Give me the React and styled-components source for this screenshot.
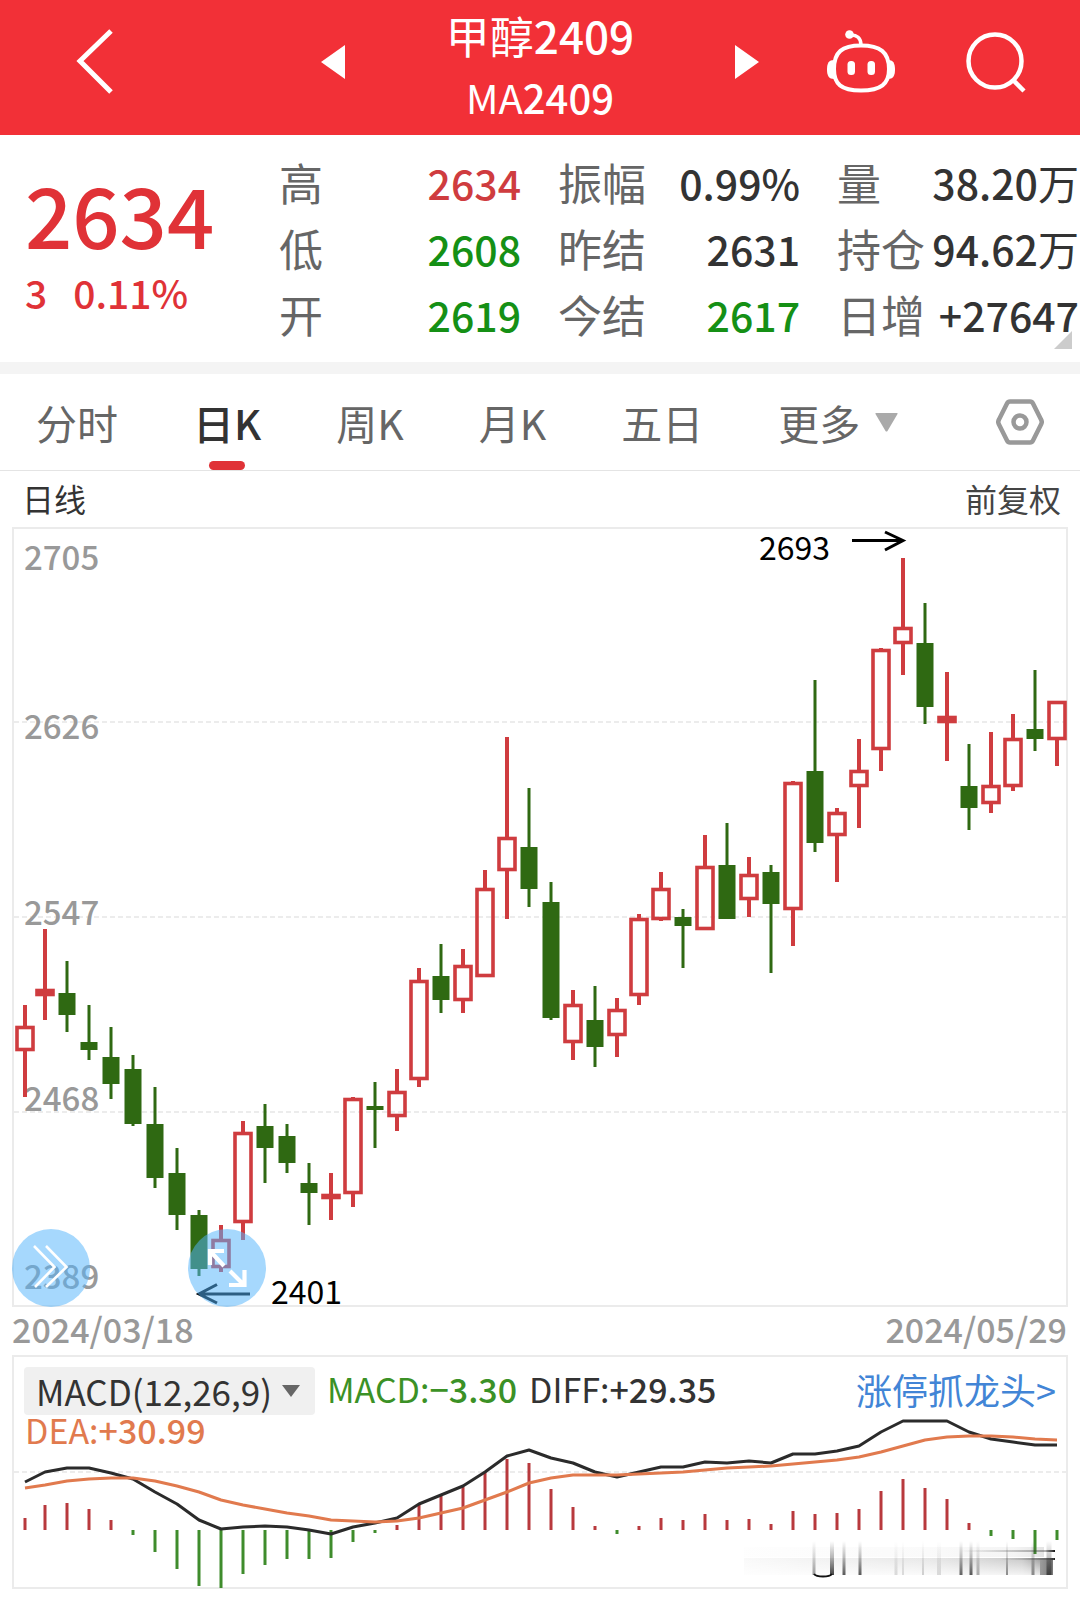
import React, { useState } from "react";
import styled, { createGlobalStyle } from "styled-components";

const RED = "#cf3c3f";
const GREEN = "#2f6912";

const GlobalStyle = createGlobalStyle`
  * {
    box-sizing: border-box;
  }

  body {
    margin: 0;
    background-color: #fff;
    color: #333;
    font-family: "Noto Sans CJK SC", "Noto Sans", sans-serif;
  }

  button, select {
    margin: 0;
    padding: 0;
    border: none;
    background: none;
    color: inherit;
    font-family: inherit;
    cursor: pointer;
  }

  svg {
    display: block;
  }
`;

const Page = styled.main`
  width: 100%;
`;

// ---------- header ----------

const Header = styled.header`
  display: grid;
  grid-template-columns: 1fr 438px 1fr;
  align-items: center;
  padding-bottom: 11px;
  background-color: #f23037;
  color: #fff;
`;

const HeaderLeft = styled.div`
  display: flex;
  padding-left: 74px;
`;

const HeaderCenter = styled.div`
  display: flex;
  align-items: center;
  justify-content: space-between;
`;

const HeaderRight = styled.div`
  display: flex;
  align-items: center;
  justify-content: flex-end;
  gap: 70px;
  padding-right: 54px;
`;

const Title = styled.h1`
  margin: 0;
  font-size: 44px;
  line-height: 70px;
  font-weight: 400;
  text-align: center;
`;

const Code = styled.small`
  display: block;
  font-size: 40px;
  line-height: 54px;
`;

const Num = styled.span`
  font-weight: 500;
`;

// ---------- quote ----------

const Quote = styled.section`
  position: relative;
  display: grid;
  grid-template-columns: 217px 1fr 1fr 1fr;
  column-gap: 37px;
  padding: 14px 1px 15px 25px;
  border-bottom: 12px solid #f4f4f4;
`;

const Latest = styled.div`
  padding-top: 22px;
  color: #e03237;
  font-weight: 500;
`;

const Price = styled.div`
  font-size: 83px;
  line-height: 84px;
`;

const Change = styled.div`
  display: flex;
  gap: 26px;
  padding-top: 8px;
  font-size: 39px;
  line-height: 58px;
`;

const Stats = styled.dl`
  margin: 0;
`;

const Stat = styled.div`
  display: flex;
  justify-content: space-between;
  line-height: 66px;
  white-space: nowrap;

  dt {
    font-size: 44px;
    color: #666;
  }

  dd {
    margin: 0;
    font-size: 41px;
    font-weight: 500;
    color: ${(props) => props.$color || "#333"};
  }
`;

const Unit = styled.span`
  font-weight: 400;
`;

const Corner = styled.svg`
  position: absolute;
  right: 8px;
  bottom: 13px;
`;

// ---------- tabs ----------

const Tabs = styled.nav`
  display: flex;
  align-items: stretch;
  gap: 75px;
  padding: 0 36px;
  border-bottom: 1px solid #e4e4e4;
`;

const Tab = styled.button`
  position: relative;
  display: flex;
  align-items: center;
  gap: 15px;
  height: 96px;
  font-size: 41px;
  line-height: 96px;
  font-weight: ${(props) => (props.$active ? 500 : 400)};
  color: ${(props) => (props.$active ? "#333" : "#666")};

  &::after {
    content: "";
    display: ${(props) => (props.$active ? "block" : "none")};
    position: absolute;
    left: 50%;
    bottom: 0;
    width: 36px;
    height: 9px;
    margin-left: -18px;
    border-radius: 5px;
    background-color: #e03237;
  }
`;

const Settings = styled.button`
  margin-left: auto;
`;

// ---------- chart ----------

const ChartHead = styled.div`
  display: flex;
  justify-content: space-between;
  padding: 0 19px 2px 22px;
  font-size: 32px;
  line-height: 54px;
`;

const Adjust = styled.span`
  color: #444;
`;

const Frame = styled.div`
  position: relative;
  margin: 0 12px;
  border: 2px solid #ebebeb;
`;

const Plot = styled.svg`
  width: 100%;
  height: auto;
  overflow: visible;
  font-size: 33px;
`;

const RoundButton = styled.button`
  position: absolute;
  left: ${(props) => props.$left};
  bottom: -2px;
  width: 78px;
  height: 78px;
  border-radius: 50%;
  background-color: rgba(84, 181, 251, 0.52);
`;

const Dates = styled.div`
  display: flex;
  justify-content: space-between;
  padding: 0 13px 4px 12px;
  font-size: 34px;
  line-height: 44px;
  font-weight: 500;
  color: #999;
`;

const MacdFrame = styled.section`
  display: grid;
  margin: 0 12px;
  border: 2px solid #ebebeb;

  > * {
    grid-area: 1 / 1;
  }
`;

const MacdHead = styled.div`
  z-index: 1;
  display: flex;
  flex-wrap: wrap;
  align-content: flex-start;
  column-gap: 12px;
  padding: 10px 10px 0;
  font-size: 34px;
  line-height: 44px;
`;

const Picker = styled.label`
  display: flex;
  align-items: center;
  gap: 10px;
  height: 48px;
  padding: 0 15px 0 12px;
  border-radius: 4px;
  background-color: #f0f0f0;

  select {
    appearance: none;
    height: 48px;
    font-size: 35px;
    line-height: 44px;
    font-weight: 400;
    color: #333;
  }
`;

const Value = styled.span`
  color: ${(props) => props.$color || "#333"};
`;

const Dea = styled.div`
  width: 100%;
  padding-left: 1px;
  line-height: 30px;
  color: #e17a4e;
`;

const Promo = styled.a`
  margin-left: auto;
  font-size: 36px;
  color: #4285d6;
  text-decoration: none;
`;

// ---------- data ----------

const up = "#cf3c3f";
const down = "#159015";

const stats = [
  [
    { label: "高", value: "2634", color: up },
    { label: "低", value: "2608", color: down },
    { label: "开", value: "2619", color: down },
  ],
  [
    { label: "振幅", value: "0.99%" },
    { label: "昨结", value: "2631" },
    { label: "今结", value: "2617", color: down },
  ],
  [
    { label: "量", value: "38.20", unit: "万" },
    { label: "持仓", value: "94.62", unit: "万" },
    { label: "日增", value: "+27647" },
  ],
];

const tabs = ["分时", "日K", "周K", "月K", "五日"];

const axis = [
  { label: "2705", y: 570 },
  { label: "2626", y: 739, line: 722 },
  { label: "2547", y: 925, line: 917 },
  { label: "2468", y: 1111, line: 1112 },
  { label: "2389", y: 1289 },
];

// [rising, high, body top, body bottom, low] in plot units
const candles = [
  [1, 1005, 1026, 1051, 1097],
  [1, 929, 989, 996, 1020],
  [0, 961, 993, 1015, 1032],
  [0, 1005, 1042, 1050, 1060],
  [0, 1027, 1057, 1084, 1099],
  [0, 1055, 1069, 1124, 1126],
  [0, 1087, 1124, 1178, 1188],
  [0, 1148, 1173, 1215, 1230],
  [0, 1210, 1215, 1269, 1276],
  [1, 1225, 1239, 1268, 1272],
  [1, 1121, 1132, 1223, 1240],
  [0, 1104, 1126, 1148, 1183],
  [0, 1124, 1136, 1163, 1173],
  [0, 1163, 1183, 1193, 1225],
  [1, 1173, 1194, 1199, 1220],
  [1, 1097, 1098, 1194, 1207],
  [0, 1082, 1106, 1110, 1148],
  [1, 1069, 1091, 1117, 1131],
  [1, 968, 980, 1080, 1087],
  [0, 944, 976, 1000, 1013],
  [1, 949, 965, 1001, 1013],
  [1, 870, 888, 977, 977],
  [1, 737, 837, 871, 919],
  [0, 788, 847, 889, 907],
  [0, 882, 902, 1018, 1020],
  [1, 990, 1004, 1043, 1060],
  [0, 986, 1020, 1047, 1067],
  [1, 998, 1009, 1036, 1057],
  [1, 914, 918, 996, 1005],
  [1, 872, 888, 920, 921],
  [0, 909, 917, 926, 968],
  [1, 835, 866, 930, 930],
  [0, 823, 865, 919, 919],
  [1, 857, 874, 900, 917],
  [0, 865, 872, 904, 973],
  [1, 781, 782, 910, 946],
  [0, 680, 771, 843, 852],
  [1, 808, 812, 836, 882],
  [1, 739, 770, 787, 828],
  [1, 648, 649, 750, 771],
  [1, 558, 627, 644, 675],
  [0, 603, 643, 707, 724],
  [1, 672, 716, 723, 761],
  [0, 744, 786, 808, 830],
  [1, 732, 785, 804, 813],
  [1, 714, 738, 787, 791],
  [0, 670, 729, 739, 751],
  [1, 701, 701, 740, 766],
];

const diff = [
  1482, 1472, 1468, 1468, 1473, 1479, 1492, 1504, 1520, 1529, 1527, 1526, 1527,
  1530, 1534, 1527, 1523, 1518, 1504, 1495, 1486, 1472, 1456, 1450, 1458, 1463,
  1472, 1477, 1472, 1467, 1467, 1462, 1463, 1461, 1463, 1454, 1454, 1451, 1446,
  1432, 1421, 1421, 1421, 1432, 1439, 1442, 1445, 1445,
];

const dea = [
  1488, 1485, 1481, 1479, 1478, 1478, 1481, 1486, 1492, 1500, 1505, 1509, 1513,
  1516, 1520, 1521, 1522, 1521, 1518, 1513, 1508, 1500, 1492, 1483, 1478, 1475,
  1475, 1475, 1474, 1473, 1472, 1470, 1468, 1467, 1466, 1464, 1462, 1460, 1457,
  1452, 1446, 1440, 1437, 1436, 1436, 1437, 1439, 1440,
];

const ZERO = 1530;
const bars = [
  12, 25, 27, 21, 10, -5, -22, -39, -56, -58, -44, -35, -29, -29, -28, -12, -3,
  5, 25, 34, 43, 58, 71, 67, 41, 23, 4, -4, 4, 12, 10, 16, 10, 11, 6, 19, 16,
  17, 21, 39, 51, 42, 31, 7, -6, -9, -24, -10,
];

// faded vertical strokes: [x, width, opacity]
const streaks = [
  [814, 3, 0.45],
  [832, 4, 0.85],
  [844, 3, 0.75],
  [860, 3, 0.75],
  [896, 3, 0.15],
  [903, 2, 0.15],
  [923, 2, 0.2],
  [939, 4, 0.15],
  [961, 3, 0.7],
  [971, 3, 0.75],
  [978, 3, 0.35],
  [1007, 2, 0.5],
  [1033, 3, 0.5],
  [1049, 5, 0.7],
];

const xAt = (i) => (i === 0 ? 25 : 23 + 22 * i);
const toPoints = (list) => list.map((y, i) => `${xAt(i)},${y}`).join(" ");

// ---------- pieces ----------

const Candle = ({ x, rising, high, top, bottom, low }) =>
  rising ? (
    <g stroke={RED} fill={bottom - top < 9 ? RED : "none"}>
      <path d={`M${x} ${high}V${top + 1}M${x} ${bottom - 1}V${low}`} strokeWidth="4" />
      <rect
        x={x - 8}
        y={top + 1.5}
        width="16"
        height={Math.max(bottom - top - 3, 2)}
        strokeWidth="3.6"
      />
    </g>
  ) : (
    <g fill={GREEN}>
      <rect x={x - 1.5} y={high} width="3" height={low - high} />
      <rect x={x - 8.5} y={top} width="17" height={bottom - top} />
    </g>
  );

const KChart = () => (
  <Plot viewBox="14 529 1052 776" role="img" aria-label="日线">
    {axis.map((a) => (
      <g key={a.label}>
        {a.line && (
          <path
            d={`M14 ${a.line}H1066`}
            stroke="#e6e6e6"
            strokeWidth="1.5"
            strokeDasharray="5 3"
          />
        )}
        <text x="24" y={a.y} fill="#999" fontWeight="500">
          {a.label}
        </text>
      </g>
    ))}
    {candles.map(([rising, high, top, bottom, low], i) => (
      <Candle key={i} x={xAt(i)} {...{ rising, high, top, bottom, low }} />
    ))}
    <g fill="none" stroke="#000" strokeWidth="3">
      <path d="M852 540.500H902M885 532L903 540.500L885 550" />
      <path d="M250 1294H200M217 1284.500L199 1294L217 1303" />
    </g>
    <g fill="#000" fontSize="32">
      <text x="759" y="560">
        2693
      </text>
      <text x="271" y="1304">
        2401
      </text>
    </g>
  </Plot>
);

const MacdChart = () => (
  <Plot viewBox="14 1357 1052 230" role="img" aria-label="MACD">
    <defs>
      <linearGradient id="streak" x1="0" y1="0" x2="0" y2="1">
        <stop offset="0" stopColor="#222" stopOpacity="0" />
        <stop offset="0.5" stopColor="#222" stopOpacity="0.4" />
        <stop offset="1" stopColor="#222" />
      </linearGradient>
      <linearGradient id="band">
        <stop offset="0" stopColor="#888" stopOpacity="0.05" />
        <stop offset="0.6" stopColor="#888" stopOpacity="0.2" />
        <stop offset="0.9" stopColor="#777" stopOpacity="0.4" />
        <stop offset="1" stopColor="#555" stopOpacity="0.8" />
      </linearGradient>
      <linearGradient id="fade" x1="0" y1="0" x2="0" y2="1">
        <stop offset="0" stopColor="#fff" stopOpacity="0" />
        <stop offset="1" stopColor="#fff" stopOpacity="0.8" />
      </linearGradient>
      <linearGradient id="rule">
        <stop offset="0" stopColor="#333" stopOpacity="0" />
        <stop offset="0.9" stopColor="#333" stopOpacity="0.4" />
        <stop offset="1" stopColor="#111" />
      </linearGradient>
    </defs>
    <path d="M14 1472H1066" stroke="#e6e6e6" strokeWidth="1.5" strokeDasharray="5 3" />
    {bars.map((v, i) => (
      <rect
        key={i}
        x={xAt(i) - 1.5}
        y={v > 0 ? ZERO - v : ZERO}
        width="3"
        height={Math.abs(v)}
        fill={v > 0 ? "#b8393d" : "#3f8c2c"}
      />
    ))}
    <g fill="none" strokeWidth="3" strokeLinejoin="round">
      <polyline points={toPoints(diff)} stroke="#2b2b2b" />
      <polyline points={toPoints(dea)} stroke="#e17a4e" />
    </g>
    <g>
      <rect x="744" y="1558" width="309" height="17" fill="url(#band)" />
      <rect x="744" y="1558" width="296" height="17" fill="url(#fade)" />
      <rect x="744" y="1547" width="300" height="10" fill="url(#band)" opacity="0.2" />
      {streaks.map(([x, w, o]) => (
        <rect
          key={x}
          x={x - w / 2}
          y="1541"
          width={w}
          height="34"
          fill="url(#streak)"
          opacity={o}
        />
      ))}
      <rect x="960" y="1550" width="95" height="2" fill="url(#rule)" />
      <rect x="1000" y="1558" width="55" height="2" fill="url(#rule)" />
      <path d="M814 1574Q816 1576.500 823 1576.500T832 1574" fill="none" stroke="#111" strokeWidth="2" />
    </g>
  </Plot>
);

const App = () => {
  const [active, setActive] = useState("日K");

  return (
    <>
      <GlobalStyle />
      <Page>
        <Header>
          <HeaderLeft>
            <button type="button" aria-label="返回">
              <svg width="40" height="66" viewBox="74 29 40 66" fill="none">
                <path d="M111 31L80 61L111 92" stroke="#fff" strokeWidth="5" />
              </svg>
            </button>
          </HeaderLeft>
          <HeaderCenter>
            <button type="button" aria-label="上一个">
              <svg width="24" height="34" viewBox="0 0 24 34" fill="#fff">
                <path d="M24 0V34L0 17Z" />
              </svg>
            </button>
            <Title>
              甲醇<Num>2409</Num>
              <Code>
                MA<Num>2409</Num>
              </Code>
            </Title>
            <button type="button" aria-label="下一个">
              <svg width="24" height="34" viewBox="0 0 24 34" fill="#fff">
                <path d="M0 0V34L24 17Z" />
              </svg>
            </button>
          </HeaderCenter>
          <HeaderRight>
            <button type="button" aria-label="助手">
              <svg width="70" height="64" viewBox="0 0 70 64" fill="none" stroke="#fff">
                <path
                  d="M35 15.500C54 15.500 63 22 63 39C63 54 55 60.500 35 60.500C15 60.500 8 54 8 39C8 22 16 15.500 35 15.500Z"
                  strokeWidth="4"
                />
                <path d="M24 5C31 4.500 35 8 35 15" strokeWidth="3.500" />
                <circle cx="23.500" cy="4.500" r="4.300" fill="#fff" stroke="none" />
                <g fill="#fff" stroke="none">
                  <path d="M8 30C3 30 1 33 1 39.500C1 46 3 49 8 49Z" />
                  <path d="M62 30C67 30 69 33 69 39.500C69 46 67 49 62 49Z" />
                  <rect x="21.500" y="31" width="7.500" height="14" rx="3.500" />
                  <rect x="41.500" y="31" width="7.500" height="14" rx="3.500" />
                </g>
              </svg>
            </button>
            <button type="button" aria-label="搜索">
              <svg width="60" height="62" viewBox="0 0 60 62" fill="none" stroke="#fff">
                <circle cx="29" cy="30" r="26.500" strokeWidth="4.500" />
                <path d="M48 50L58 60" strokeWidth="4.500" />
              </svg>
            </button>
          </HeaderRight>
        </Header>

        <Quote>
          <Latest>
            <Price>2634</Price>
            <Change>
              <span>3</span>
              <span>0.11%</span>
            </Change>
          </Latest>
          {stats.map((group, i) => (
            <Stats key={i}>
              {group.map((s) => (
                <Stat key={s.label} $color={s.color}>
                  <dt>{s.label}</dt>
                  <dd>
                    {s.value}
                    {s.unit && <Unit>{s.unit}</Unit>}
                  </dd>
                </Stat>
              ))}
            </Stats>
          ))}
          <Corner width="18" height="18" viewBox="0 0 18 18" fill="#ccc">
            <path d="M18 0V18H0Z" />
          </Corner>
        </Quote>

        <Tabs>
          {tabs.map((t) => (
            <Tab key={t} type="button" $active={t === active} onClick={() => setActive(t)}>
              {t}
            </Tab>
          ))}
          <Tab type="button" aria-haspopup="menu">
            更多
            <svg width="23" height="19" viewBox="0 0 23 19" fill="#aaa">
              <path d="M1 0H22Q23 0 22.500 1L12.500 18Q11.500 19 10.500 18L0.500 1Q0 0 1 0Z" />
            </svg>
          </Tab>
          <Settings type="button" aria-label="设置">
            <svg width="48" height="46" viewBox="0 0 48 46" fill="none" stroke="#999">
              <path
                d="M14 2.500H34Q36 2.500 37 4.500L45 20.500Q46.500 23 45 25.500L37 41.500Q36 43.500 34 43.500H14Q12 43.500 11 41.500L3 25.500Q1.500 23 3 20.500L11 4.500Q12 2.500 14 2.500Z"
                strokeWidth="4.500"
              />
              <circle cx="24" cy="23" r="6.500" strokeWidth="4.500" />
            </svg>
          </Settings>
        </Tabs>

        <ChartHead>
          <span>日线</span>
          <Adjust>前复权</Adjust>
        </ChartHead>
        <Frame>
          <KChart />
          <RoundButton type="button" aria-label="展开" $left="-2px">
            <svg width="78" height="78" viewBox="12 1229 78 78" fill="none" stroke="#fff">
              <path
                d="M34 1246L54.500 1267L35 1287M46 1246L66.500 1267L46 1287"
                strokeWidth="2.600"
              />
            </svg>
          </RoundButton>
          <RoundButton type="button" aria-label="全屏" $left="16.5%">
            <svg width="78" height="78" viewBox="188 1229 78 78" fill="none" stroke="#fff">
              <path
                d="M224 1251H210V1265M210 1251L224 1266M230 1271L244 1285M229 1285H244.500V1270"
                strokeWidth="4.200"
              />
            </svg>
          </RoundButton>
        </Frame>
        <Dates>
          <time>2024/03/18</time>
          <time>2024/05/29</time>
        </Dates>

        <MacdFrame>
          <MacdChart />
          <MacdHead>
            <Picker>
              <select aria-label="指标" defaultValue="macd">
                <option value="macd">MACD(12,26,9)</option>
              </select>
              <svg width="18" height="12" viewBox="0 0 18 12" fill="#666">
                <path d="M0 0H18L9 12Z" />
              </svg>
            </Picker>
            <Value $color="#3b9126">
              MACD:<Num>−3.30</Num>
            </Value>
            <Value>
              DIFF:<Num>+29.35</Num>
            </Value>
            <Promo href="#">涨停抓龙头&gt;</Promo>
            <Dea>
              DEA:<Num>+30.99</Num>
            </Dea>
          </MacdHead>
        </MacdFrame>
      </Page>
    </>
  );
};

export default App;
